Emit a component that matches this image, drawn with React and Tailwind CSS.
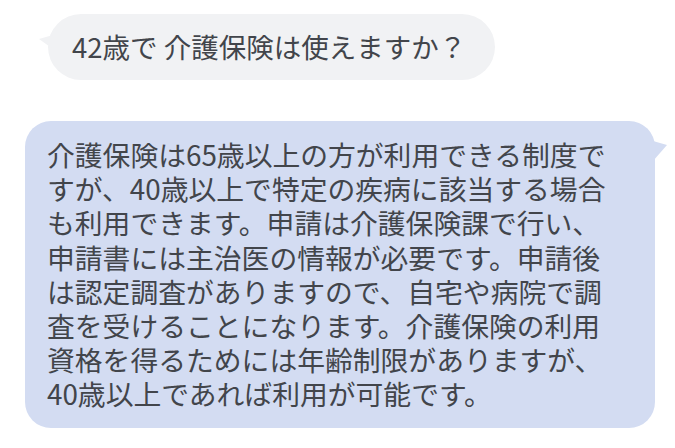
import React from "react";

const answerLines = [
  "介護保険は65歳以上の方が利用できる制度で",
  "すが、40歳以上で特定の疾病に該当する場合",
  "も利用できます。申請は介護保険課で行い、",
  "申請書には主治医の情報が必要です。申請後",
  "は認定調査がありますので、自宅や病院で調",
  "査を受けることになります。介護保険の利用",
  "資格を得るためには年齢制限がありますが、",
  "40歳以上であれば利用が可能です。",
];

const App = () => {
  return (
    <div
      className="w-[675px] h-[448px] bg-white overflow-hidden flex flex-col text-[#42454b]"
      style={{ fontFamily: '"Noto Sans CJK JP", "Noto Sans", sans-serif' }}
    >
      {/* question bubble */}
      <div className="relative ml-[48px] mt-[14px] self-start">
        <svg
          className="absolute left-[-9px] top-[21px]"
          width="14"
          height="16"
          viewBox="0 0 14 16"
        >
          <polygon points="0,4 14,0 14,14" fill="#f1f2f4" />
        </svg>
        <div className="h-[66px] w-[447px] rounded-full bg-[#f1f2f4] flex items-center pl-[24px] text-[27.5px] leading-none whitespace-nowrap">
          42歳で 介護保険は使えますか？
        </div>
      </div>

      {/* answer bubble */}
      <div className="relative ml-[25px] mt-[41px] self-start">
        <svg
          className="absolute right-[-12px] top-[16px]"
          width="14"
          height="28"
          viewBox="0 0 14 28"
        >
          <polygon points="0,4 14,8 0,24" fill="#d3dcf2" />
        </svg>
        <div className="w-[630px] h-[307px] rounded-[26px] bg-[#d3dcf2] pl-[22px] pt-[16px] text-[27.8px] leading-[34.2px] whitespace-nowrap">
          {answerLines.map((line, i) => (
            <div key={i}>{line}</div>
          ))}
        </div>
      </div>
    </div>
  );
};

export default App;
